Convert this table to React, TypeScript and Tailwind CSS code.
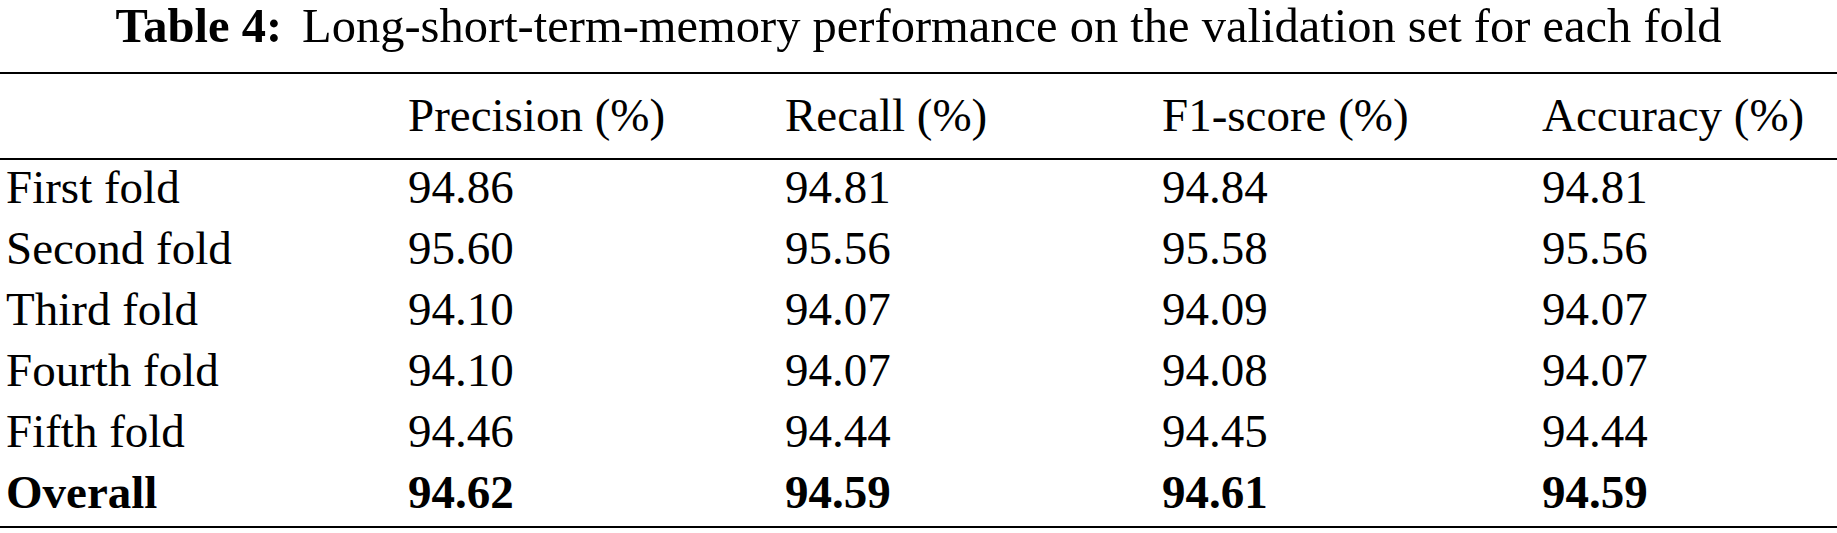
const headers = ['Precision (%)', 'Recall (%)', 'F1-score (%)', 'Accuracy (%)']

const rows: { label: string; values: string[]; bold?: boolean }[] = [
  { label: 'First fold', values: ['94.86', '94.81', '94.84', '94.81'] },
  { label: 'Second fold', values: ['95.60', '95.56', '95.58', '95.56'] },
  { label: 'Third fold', values: ['94.10', '94.07', '94.09', '94.07'] },
  { label: 'Fourth fold', values: ['94.10', '94.07', '94.08', '94.07'] },
  { label: 'Fifth fold', values: ['94.46', '94.44', '94.45', '94.44'] },
  { label: 'Overall', values: ['94.62', '94.59', '94.61', '94.59'], bold: true },
]

const cols = 'grid grid-cols-[402px_377px_377px_380px_1fr] pl-[6px]'

export default function App() {
  return (
    <div className="w-[1837px] h-[533px] bg-white text-black font-[family-name:'Liberation_Serif','Times_New_Roman',serif] text-[47px]">
      {/* caption */}
      <div className="h-[72px] flex items-start justify-center pt-[1px] leading-[50px] text-[48.5px]">
        <span className="font-bold">Table 4:</span>
        <span className="ml-[20px]">Long-short-term-memory performance on the validation set for each fold</span>
      </div>

      <div className="h-[2px] bg-black" />

      <div className={`${cols} h-[84px] items-center leading-none pb-[2px]`}>
        <div />
        {headers.map((h) => (
          <div key={h}>{h}</div>
        ))}
      </div>

      <div className="h-[2px] bg-black" />

      <div className="flex flex-col">
        {rows.map((r) => (
          <div key={r.label} className={`${cols} h-[61px] items-center leading-none pb-[6px] ${r.bold ? 'font-bold' : ''}`}>
            <div>{r.label}</div>
            {r.values.map((v, i) => (
              <div key={i}>{v}</div>
            ))}
          </div>
        ))}
      </div>

      <div className="h-[2px] bg-black" />
    </div>
  )
}
